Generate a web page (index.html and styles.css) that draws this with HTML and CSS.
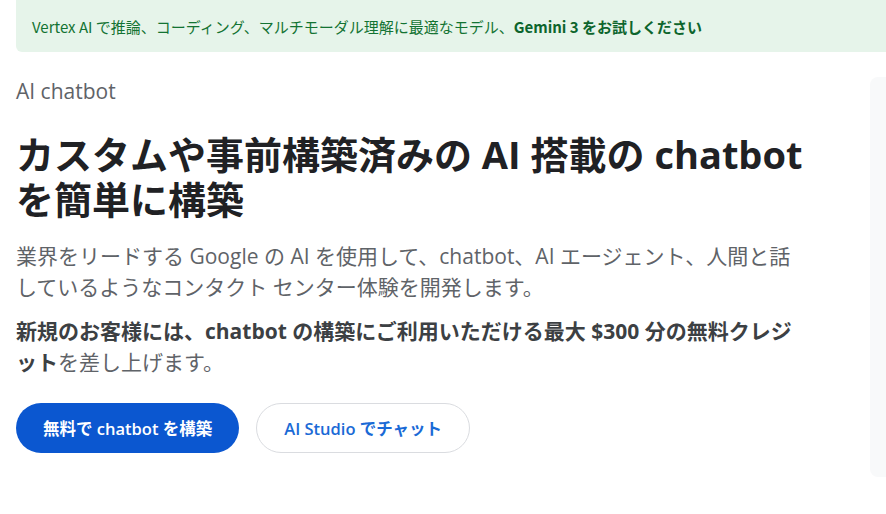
FILE: index.html
```html
<!DOCTYPE html>
<html lang="ja">
<head>
    <meta charset="UTF-8">
    <meta name="viewport" content="width=device-width, initial-scale=1.0">
    <title>AI chatbot</title>
    <link rel="stylesheet" href="styles.css">
</head>
<body>
    <div class="banner">
        Vertex AI で推論、コーディング、マルチモーダル理解に最適なモデル、<strong>Gemini 3 をお試しください</strong>
    </div>
    <div class="page">
        <main class="hero">
            <div class="eyebrow">AI chatbot</div>
            <h1>カスタムや事前構築済みの AI 搭載の chatbot を簡単に構築</h1>
            <p class="lead">業界をリードする Google の AI を使用して、chatbot、AI エージェント、人間と話しているようなコンタクト センター体験を開発します。</p>
            <p class="lead"><strong>新規のお客様には、chatbot の構築にご利用いただける最大 $300 分の無料クレジット</strong>を差し上げます。</p>
            <div class="actions">
                <a class="btn btn-primary" href="#">無料で chatbot を構築</a>
                <a class="btn btn-outline" href="#">AI Studio でチャット</a>
            </div>
        </main>
        <aside class="side-panel"></aside>
    </div>
</body>
</html>
```

FILE: styles.css
```css
body {
    margin: 0;
    font-family: "Open Sans", "Noto Sans CJK JP", sans-serif;
    background-color: #fff;
    color: #202124;
    overflow: hidden;
}

.banner {
    margin: 0 0 0 16px;
    height: 52px;
    display: flex;
    align-items: center;
    padding-left: 16px;
    background-color: #e6f4ea;
    border-radius: 0 0 0 6px;
    color: #137333;
    font-family: "Noto Sans CJK JP", sans-serif;
    font-size: 15px;
}
.banner strong {
    font-weight: 700;
    color: #0d652d;
}

.page {
    display: flex;
    gap: 62px;
    padding: 25px 0 0 16px;
}
.hero {
    width: 792px;
    flex-shrink: 0;
}
.eyebrow {
    font-size: 21px;
    color: #5f6368;
    line-height: 28px;
    margin-bottom: 27px;
}
h1 {
    margin: 0 0 19px;
    font-size: 38px;
    line-height: 45px;
    font-weight: 700;
    color: #202124;
}
.lead {
    margin: 0 0 13px;
    font-size: 21px;
    line-height: 31px;
    color: #5f6368;
}
.lead strong {
    color: #3c4043;
}
.actions {
    display: flex;
    gap: 17px;
    margin-top: 25px;
}
.btn {
    display: inline-flex;
    align-items: center;
    justify-content: center;
    height: 50px;
    padding: 0 27px;
    border-radius: 25px;
    font-size: 16.5px;
    font-weight: 600;
    text-decoration: none;
    box-sizing: border-box;
}
.btn-primary {
    background-color: #0b57d0;
    color: #fff;
}
.btn-outline {
    border: 1px solid #dadce0;
    color: #1a6ad6;
}
.side-panel {
    flex-shrink: 0;
    width: 200px;
    height: 400px;
    background-color: #f8f9fa;
    border-radius: 8px;
}
```
